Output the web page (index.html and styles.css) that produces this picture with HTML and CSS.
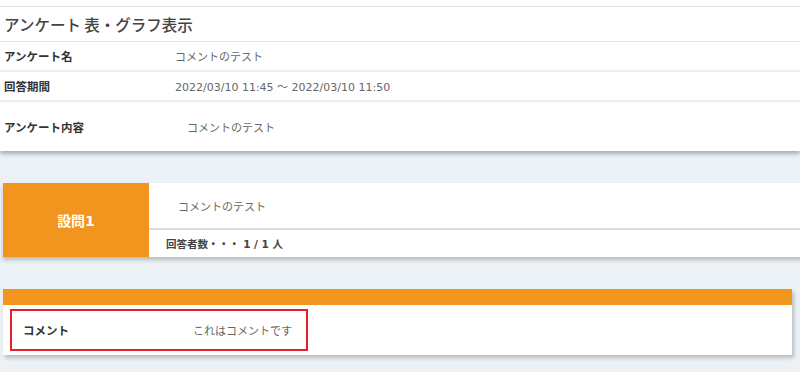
FILE: index.html
```html
<!DOCTYPE html>
<html lang="ja">
  <head>
    <meta charset="UTF-8" />
    <meta name="viewport" content="width=device-width, initial-scale=1.0" />
    <title>アンケート 表・グラフ表示</title>
    <link rel="stylesheet" href="styles.css">
  </head>
  <body>
    <div class="top-strip"></div>
    <div class="summary">
      <h1 class="summary-title">アンケート 表・グラフ表示</h1>
      <div class="summary-row">
        <div class="label">アンケート名</div>
        <div class="value">コメントのテスト</div>
      </div>
      <div class="summary-row">
        <div class="label">回答期間</div>
        <div class="value">2022/03/10 11:45 ～ 2022/03/10 11:50</div>
      </div>
      <div class="summary-row tall">
        <div class="label">アンケート内容</div>
        <div class="value indent">コメントのテスト</div>
      </div>
    </div>

    <div class="question">
      <div class="question-no">設問1</div>
      <div class="question-body">
        <div class="question-text">コメントのテスト</div>
        <div class="question-count">回答者数・・・ 1 / 1 人</div>
      </div>
    </div>

    <div class="answer">
      <div class="answer-bar"></div>
      <div class="answer-body">
        <div class="answer-item">
          <div class="answer-label">コメント</div>
          <div class="answer-value">これはコメントです</div>
        </div>
      </div>
    </div>
  </body>
</html>
```

FILE: styles.css
```css
* {
  padding: 0;
  margin: 0;
  box-sizing: border-box;
}
html,
body {
  overflow: hidden;
}
body {
  background-color: #ecf1f5;
  font-family: "DejaVu Sans", "Noto Sans CJK JP", sans-serif;
  color: #333;
  height: 372px;
}
.top-strip {
  height: 7px;
  background-color: #fff;
  border-bottom: 1px solid #e8e8e8;
}
.summary {
  background-color: #fff;
  box-shadow: 0 3px 4px rgba(0, 0, 0, 0.28);
}
.summary-title {
  height: 35px;
  padding-left: 4px;
  font-family: "Noto Sans CJK JP", sans-serif;
  font-size: 15.5px;
  font-weight: 500;
  line-height: 34px;
  color: #444;
  border-bottom: 1px solid #e6e6e6;
}
.summary-row {
  display: flex;
  align-items: center;
  height: 30px;
  border-bottom: 2px solid #eee;
}
.summary-row.tall {
  height: 49px;
  border-bottom: none;
}
.label {
  width: 175px;
  padding-left: 4px;
  font-size: 11.5px;
  font-weight: bold;
  color: #333;
}
.value {
  font-size: 11px;
  color: #666;
}
.value.indent {
  padding-left: 12px;
}
.question {
  display: flex;
  margin: 32px -10px 0 3px;
  height: 74px;
  background-color: #fff;
  box-shadow: 0 3px 4px rgba(0, 0, 0, 0.22);
}
.question-no {
  width: 146px;
  display: flex;
  align-items: center;
  justify-content: center;
  background-color: #f1951e;
  color: #fff;
  font-size: 14px;
  font-weight: bold;
}
.question-body {
  flex: 1;
  display: flex;
  flex-direction: column;
}
.question-text {
  height: 47px;
  padding: 15px 0 0 29px;
  font-size: 11px;
  color: #666;
  border-bottom: 2px solid #ddd;
}
.question-count {
  flex: 1;
  display: flex;
  align-items: center;
  padding-left: 17px;
  font-size: 10.5px;
  font-weight: bold;
  color: #444;
}
.answer {
  margin: 32px 8px 0 3px;
  background-color: #fff;
  box-shadow: 2px 3px 4px rgba(0, 0, 0, 0.22);
}
.answer-bar {
  height: 16px;
  background-color: #f1951e;
}
.answer-body {
  padding: 4px 0 4px 7px;
}
.answer-item {
  display: flex;
  align-items: center;
  width: 298px;
  height: 42px;
  border: 2px solid #e3202a;
  padding-left: 11px;
}
.answer-label {
  width: 170px;
  font-size: 11.5px;
  font-weight: bold;
  color: #333;
}
.answer-value {
  font-size: 11px;
  color: #666;
}
```
